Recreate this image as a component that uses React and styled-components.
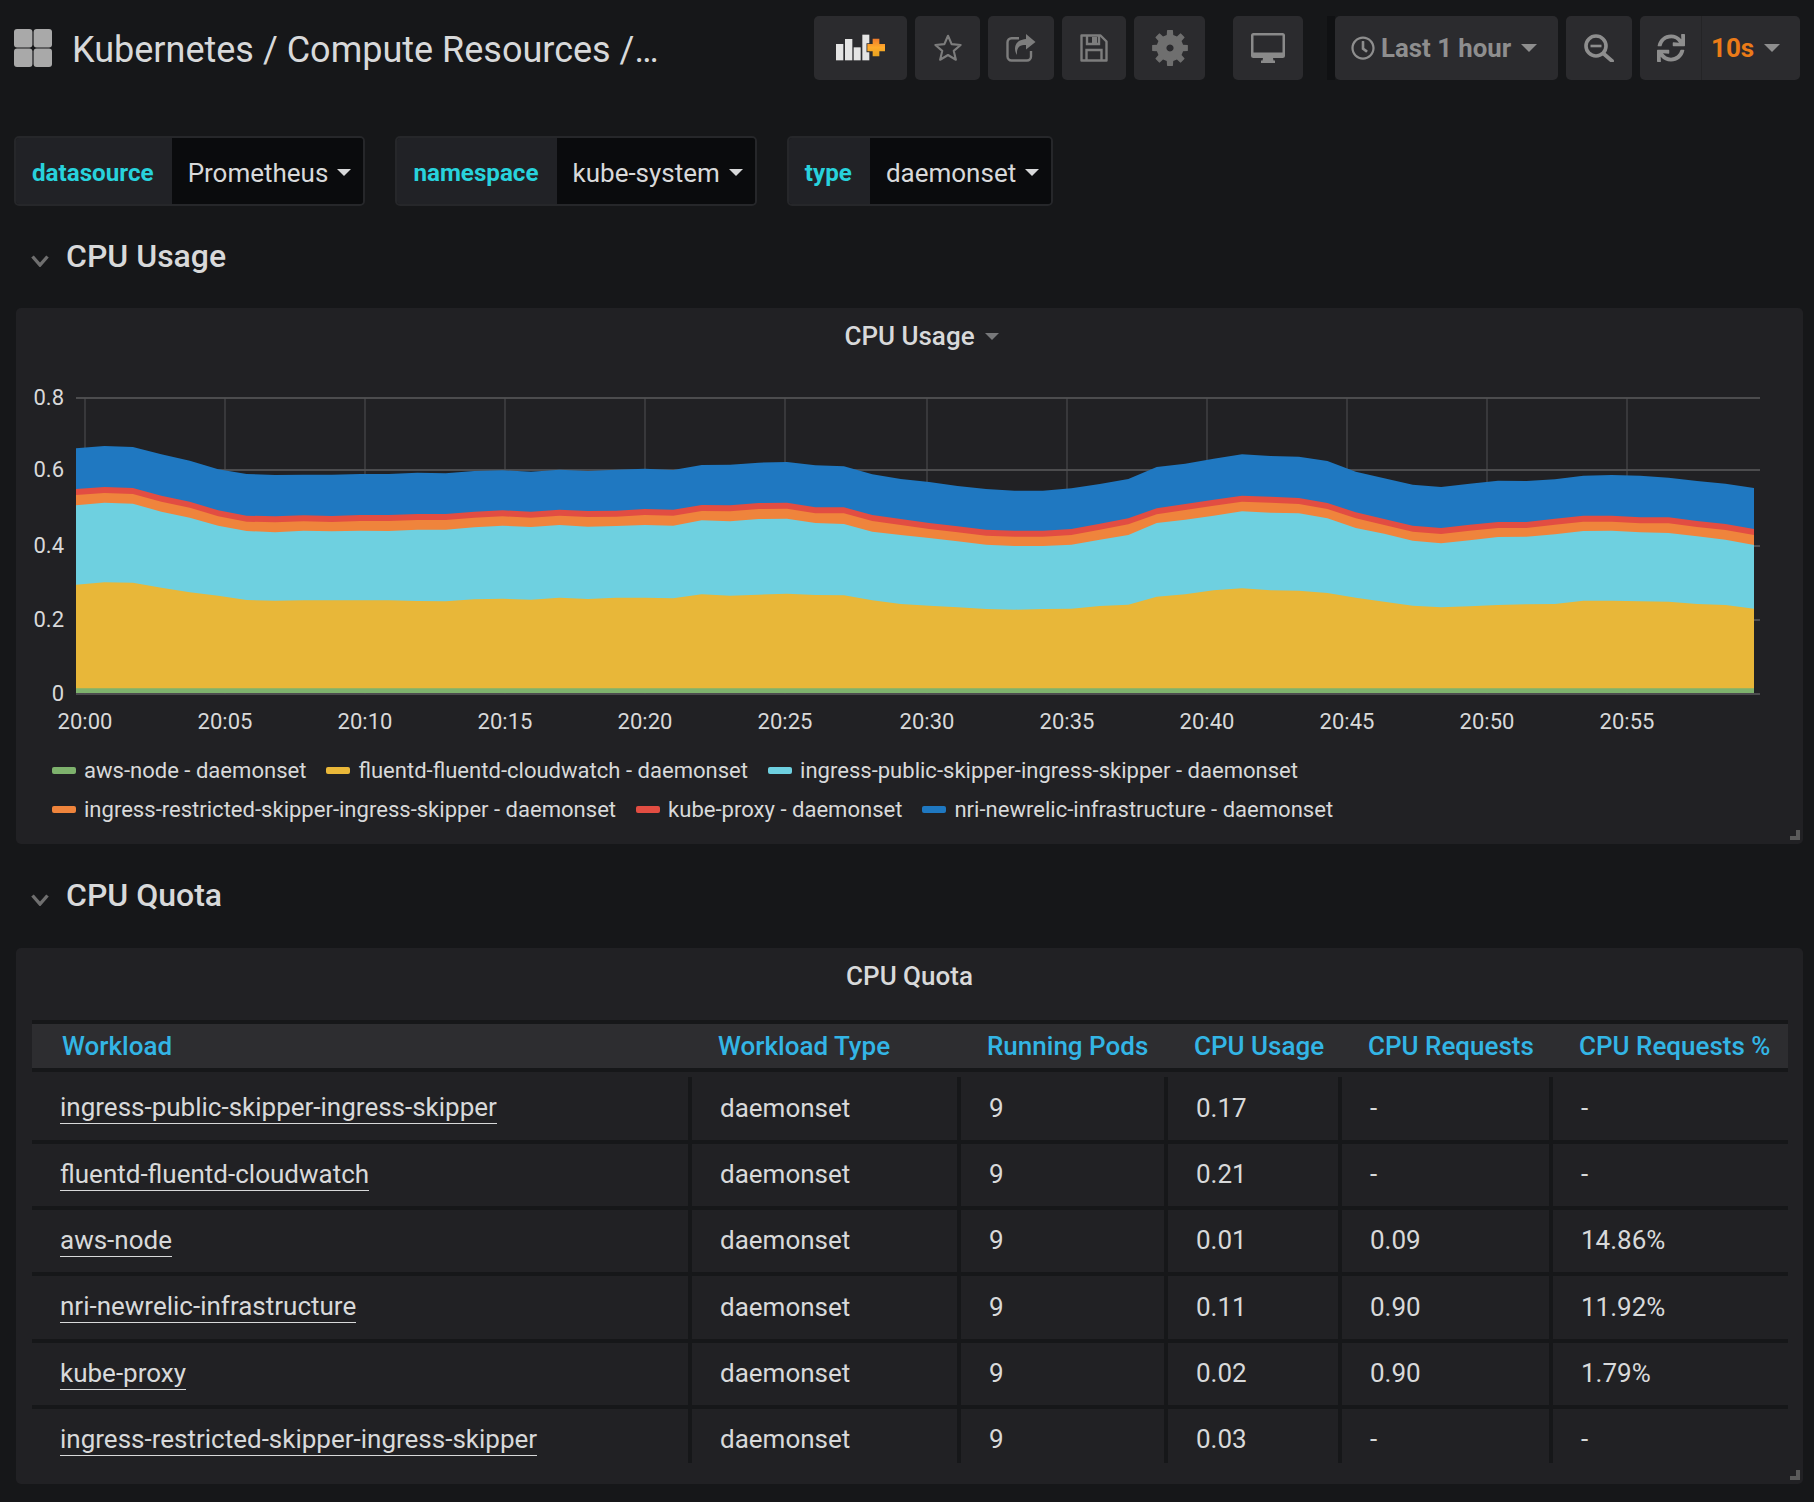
import React from 'react'
import styled, { createGlobalStyle } from 'styled-components'
import { FaRegClock, FaSync } from 'react-icons/fa'

const GlobalStyle = createGlobalStyle`
    html, body {
        margin: 0;
        padding: 0;
        background: #161719;
        color: #d8d9da;
        font-family: Roboto, "Liberation Sans", sans-serif;
    }
    * {
        box-sizing: border-box;
    }
`
const Page = styled.div`
    width: 1814px;
    height: 1502px;
    padding-top: 16px;
    overflow: hidden;
`
const Navbar = styled.div`
    display: flex;
    align-items: center;
    height: 64px;
    padding: 0 14px;
`
const TitleBlock = styled.div`
    display: flex;
    align-items: center;
    flex: 1;
    gap: 20px;
`
const PageTitle = styled.div`
    padding-top: 4px;
    font-size: 36px;
    color: #d8d9da;
    white-space: nowrap;
`
const ButtonGroup = styled.div`
    display: flex;
    gap: 8px;
    margin-left: ${p => p.$offset || 0}px;
    position: relative;
`
const TimeShadow = styled.div`
    width: 8px;
    height: 64px;
    margin-left: 24px;
    background: #101113;
`
const NavButton = styled.div`
    display: flex;
    align-items: center;
    justify-content: center;
    width: ${p => p.$width}px;
    height: 64px;
    background: #2b2b2e;
    border-radius: 5px;
    color: #7d7d7d;
`
const TimeButton = styled(NavButton)`
    justify-content: flex-start;
    padding-left: 16px;
    color: #8e8e8e;
    font-size: 25.8px;
    font-weight: 700;
`
const TimeText = styled.span`
    margin-left: 6px;
    margin-right: 10px;
`
const RefreshButton = styled(NavButton)`
    justify-content: flex-start;
`
const RefreshIcon = styled.div`
    display: flex;
    align-items: center;
    justify-content: center;
    width: 62px;
    height: 64px;
    border-right: 1px solid #242426;
    color: #8e8e8e;
`
const Interval = styled.span`
    margin-left: 9px;
    margin-right: 10px;
    color: #eb7b18;
    font-size: 26px;
    font-weight: 700;
`
const Caret = styled.span`
    display: inline-block;
    width: 0;
    height: 0;
    border-left: ${p => p.$size || 8}px solid transparent;
    border-right: ${p => p.$size || 8}px solid transparent;
    border-top: ${p => p.$size || 8}px solid ${p => p.$color || '#8e8e8e'};
`
const Templates = styled.div`
    display: flex;
    gap: 30px;
    margin: 56px 0 0 14px;
`
const Template = styled.div`
    display: flex;
    height: 70px;
    border: 2px solid #26272a;
    border-radius: 5px;
    overflow: hidden;
`
const TemplateLabel = styled.div`
    display: flex;
    align-items: center;
    padding: 3px 18px 0 16px;
    background: #212226;
    color: #28d2dc;
    font-size: 24.2px;
    font-weight: 700;
`
const TemplateValue = styled.div`
    display: flex;
    align-items: center;
    gap: 9px;
    padding: 3px 12px 0 16px;
    background: #0a0b0d;
    color: #d8d9da;
    font-size: 26px;
`
const SectionRow = styled.div`
    display: flex;
    align-items: center;
    gap: 17px;
    height: ${p => p.$height}px;
    padding-left: 31px;
    padding-bottom: 2px;
    color: #d8d9da;
    font-size: 32px;
    font-weight: 500;
`
const Chevron = styled.svg`
    width: 18px;
    height: 12px;
    margin-top: 10px;
`
const Panel = styled.div`
    position: relative;
    width: 1787px;
    height: 536px;
    margin-left: 16px;
    background: #212124;
    border-radius: 5px;
`
const PanelTitle = styled.div`
    display: flex;
    justify-content: center;
    padding-top: 13px;
    height: 72px;
    line-height: 30px;
    font-size: 26px;
    font-weight: 500;
`
const PanelTitleText = styled.span`
    position: relative;
`
const TitleCaret = styled.span`
    position: absolute;
    display: flex;
    left: calc(100% + 10px);
    top: 12px;
`
const ChartSvg = styled.svg`
    display: block;
    margin-top: -1px;
`
const Legend = styled.div`
    display: flex;
    flex-wrap: wrap;
    column-gap: 20px;
    padding: 6px 36px 0;
`
const LegendItem = styled.div`
    display: flex;
    align-items: center;
    height: 39px;
    font-size: 22.05px;
    color: #d8d9da;
`
const Swatch = styled.span`
    width: 24px;
    height: 7px;
    margin-right: 8px;
    border-radius: 2px;
    background: ${p => p.$color};
`
const ResizeHandle = styled.svg`
    position: absolute;
    right: 3px;
    bottom: 4px;
`
const Table = styled.table`
    width: 1756px;
    margin-left: 16px;
    border-collapse: separate;
    border-spacing: 0;
    table-layout: fixed;
`
const HeadCell = styled.th`
    height: 52px;
    padding: 0 0 0 ${p => p.$first ? 30 : 26}px;
    background: #2d2d30;
    border-top: 4px solid #161719;
    border-bottom: 4px solid #161719;
    color: #33b5e5;
    font-size: 26px;
    font-weight: 500;
    text-align: left;
    white-space: nowrap;
`
const Spacer = styled.td`
    height: 5px;
    padding: 0;
`
const Cell = styled.td`
    height: ${p => p.$height}px;
    padding: ${p => p.$last ? 6 : 0}px 0 ${p => p.$last ? 0 : 2}px 28px;
    border-bottom: ${p => p.$last ? 0 : 4}px solid #161719;
    border-right: ${p => p.$end ? 0 : 4}px solid #161719;
    font-size: 26px;
    color: #d8d9da;
    white-space: nowrap;
`
const WorkloadLink = styled.span`
    display: inline-block;
    vertical-align: -1px;
    line-height: 30px;
    padding-bottom: 1px;
    border-bottom: 1px solid #d8d9da;
`

const series = [
    { name: 'aws-node - daemonset', color: '#7eb26d' },
    { name: 'fluentd-fluentd-cloudwatch - daemonset', color: '#eab839' },
    { name: 'ingress-public-skipper-ingress-skipper - daemonset', color: '#6ed0e0' },
    { name: 'ingress-restricted-skipper-ingress-skipper - daemonset', color: '#ef843c' },
    { name: 'kube-proxy - daemonset', color: '#e24d42' },
    { name: 'nri-newrelic-infrastructure - daemonset', color: '#1f78c1' },
]

// upper edge of every stacked band, one value a minute
const blueTop = [448,441,444,466,485,511,525,528,527,527,525,525,521,523,516,514,518,512,516,512,509,513,498,497,491,489,499,502,526,540,549,561,570,575,575,568,555,540,504,494,479,466,471,473,486,518,538,557,564,554,545,546,541,530,528,530,536,546,554,567]
const redTop = [570,564,567,590,608,634,650,652,649,651,648,648,645,645,638,634,638,632,636,635,630,632,618,619,612,611,625,625,648,660,672,682,692,695,695,690,674,658,628,615,602,590,593,597,612,640,660,680,687,677,669,669,659,650,650,655,655,666,675,690]
const cyanTop = [619,611,614,638,656,680,696,700,695,697,695,696,692,692,685,680,684,678,683,681,678,680,664,667,660,659,672,675,698,708,717,727,737,741,741,737,722,708,672,662,650,637,641,643,658,687,704,725,733,724,714,713,706,696,695,700,702,712,722,738]
const yellowTop = [857,850,851,866,880,890,903,905,904,904,904,904,906,907,901,899,902,896,900,896,896,898,886,890,887,884,888,889,904,915,920,925,930,932,930,929,921,917,893,886,874,868,874,875,882,896,908,920,925,922,918,916,915,905,905,907,908,915,918,929]
const orangeTop = redTop.map(v => v + 18)
const greenTop = redTop.map(() => 1168)

const BASE_Y = 694
const toX = i => 76 + i * 28.44
const toY = v => 300 + v / 3
const band = top => `76,${BASE_Y} ` + top.map((v, i) => `${toX(i).toFixed(1)},${toY(v).toFixed(1)}`).join(' ') + ` 1754,${BASE_Y}`

const layers = [
    { top: blueTop, color: '#1f78c1' },
    { top: redTop, color: '#e24d42' },
    { top: orangeTop, color: '#ef843c' },
    { top: cyanTop, color: '#6ed0e0' },
    { top: yellowTop, color: '#e8b739' },
    { top: greenTop, color: '#7eb26d' },
]
const yTicks = [['0.8', 399], ['0.6', 471], ['0.4', 547], ['0.2', 621], ['0', 695]]
const xTicks = [['20:00', 85], ['20:05', 225], ['20:10', 365], ['20:15', 505], ['20:20', 645], ['20:25', 785], ['20:30', 927], ['20:35', 1067], ['20:40', 1207], ['20:45', 1347], ['20:50', 1487], ['20:55', 1627]]

const columns = [
    { title: 'Workload', width: 660 },
    { title: 'Workload Type', width: 269 },
    { title: 'Running Pods', width: 207 },
    { title: 'CPU Usage', width: 174 },
    { title: 'CPU Requests', width: 211 },
    { title: 'CPU Requests %', width: 235 },
]
const rows = [
    ['ingress-public-skipper-ingress-skipper', 'daemonset', '9', '0.17', '-', '-'],
    ['fluentd-fluentd-cloudwatch', 'daemonset', '9', '0.21', '-', '-'],
    ['aws-node', 'daemonset', '9', '0.01', '0.09', '14.86%'],
    ['nri-newrelic-infrastructure', 'daemonset', '9', '0.11', '0.90', '11.92%'],
    ['kube-proxy', 'daemonset', '9', '0.02', '0.90', '1.79%'],
    ['ingress-restricted-skipper-ingress-skipper', 'daemonset', '9', '0.03', '-', '-'],
]
const rowHeights = [67, 66, 66, 67, 66, 54]

const gearPath = () => {
    const teeth = 8
    const pts = []
    for (let i = 0; i < teeth; i++) {
        const a = (i / teeth) * Math.PI * 2 - Math.PI / 2
        const step = Math.PI / teeth
        const corners = [[a - step * 0.42, 18], [a - step * 0.3, 18], [a + step * 0.3, 18], [a + step * 0.42, 18], [a + step * 0.62, 13.5], [a + step * 1.38, 13.5]]
        corners.forEach(([ang, r]) => pts.push(`${(18 + Math.cos(ang) * r).toFixed(2)} ${(18 + Math.sin(ang) * r).toFixed(2)}`))
    }
    return `M${pts.join('L')}Z M18 14.4a3.6 3.6 0 1 0 .01 0Z`
}

const Logo = () => (
    <svg width="38" height="38" viewBox="0 0 38 38" fill="#a9a9a9">
        <rect x="0" y="0" width="18.4" height="18.4" rx="3" />
        <rect x="19.6" y="0" width="18.4" height="18.4" rx="3" />
        <rect x="0" y="19.6" width="18.4" height="18.4" rx="3" />
        <rect x="19.6" y="19.6" width="18.4" height="18.4" rx="3" />
    </svg>
)
const AddPanelIcon = () => (
    <svg width="50" height="30" viewBox="0 0 150 90">
        <defs>
            <linearGradient id="plus" x1="0" y1="0" x2="0" y2="1">
                <stop offset="0" stopColor="#ef7a2b" />
                <stop offset="0.5" stopColor="#ffab2b" />
                <stop offset="1" stopColor="#e5a21f" />
            </linearGradient>
        </defs>
        <g fill="#e4e4e4">
            <rect x="0" y="33" width="22" height="49" />
            <rect x="27" y="18" width="22" height="64" />
            <rect x="53" y="43" width="21" height="39" />
            <rect x="79" y="5" width="21" height="77" />
        </g>
        <path d="M110 17h20v16h17v22h-17v15h-20v-15h-16v-22h16z" fill="url(#plus)" stroke="#2b2b2e" strokeWidth="5" paintOrder="stroke" />
    </svg>
)
const StarIcon = () => (
    <svg width="30" height="30" viewBox="0 0 24 24" fill="none" stroke="#7d7d7d" strokeWidth="1.7" strokeLinejoin="round">
        <path d="M12 2.2l2.9 6.7 7.2.7-5.5 4.7 1.7 7.1-6.3-3.8-6.3 3.8 1.7-7.1-5.5-4.7 7.2-.7z" />
    </svg>
)
const ShareIcon = () => (
    <svg width="30" height="28" viewBox="0 0 30 28">
        <path d="M13 4.200H5.500a4 4 0 0 0-4 4V22.500a4 4 0 0 0 4 4H21a4 4 0 0 0 4-4V17" fill="none" stroke="#7d7d7d" strokeWidth="2.400" />
        <path d="M20 0l9.500 8-9.500 7.500V11C14 11 10.500 12.500 11 21 7.500 16 7.500 6 20 5z" fill="#7d7d7d" />
    </svg>
)
const SaveIcon = () => (
    <svg width="28" height="28" viewBox="0 0 28 28" fill="none" stroke="#7d7d7d" strokeWidth="2.4">
        <path d="M1.5 1.5h19l6 6v19h-25z" strokeLinejoin="round" />
        <path d="M7 2v8h12V2" />
        <path d="M6.5 26v-10h15v10" />
        <rect x="12" y="3" width="5" height="6" fill="#7d7d7d" stroke="none" />
    </svg>
)
const GearIcon = () => (
    <svg width="36" height="36" viewBox="0 0 36 36">
        <path d={gearPath()} fill="#6f6f6f" fillRule="evenodd" />
    </svg>
)
const DesktopIcon = () => (
    <svg width="34" height="30" viewBox="0 0 34 30">
        <path d="M2.5 0h29A2.5 2.5 0 0 1 34 2.5v20a2.5 2.5 0 0 1-2.5 2.5H22l.5 2.5H24V30H10v-2.5h1.500L12 25H2.500A2.500 2.500 0 0 1 0 22.500v-20A2.500 2.500 0 0 1 2.500 0zM2.500 2.500v17h29v-17z" fill="#8a8a8a" fillRule="evenodd" />
    </svg>
)
const ZoomOutIcon = () => (
    <svg width="30" height="28" viewBox="0 0 30 28" fill="none" stroke="#8e8e8e">
        <circle cx="12" cy="12" r="10" strokeWidth="3.6" />
        <path d="M6.500 12h11" strokeWidth="2.600" />
        <path d="M20 20l8 7" strokeWidth="3.800" strokeLinecap="round" />
    </svg>
)
const SectionChevron = () => (
    <Chevron viewBox="0 0 18 12" fill="none" stroke="#6f6f6f" strokeWidth="3.400">
        <path d="M1.500 1.500L9 10l7.500-8.500" />
    </Chevron>
)
const Handle = () => (
    <ResizeHandle width="10" height="10" viewBox="0 0 10 10">
        <path d="M6 0h4v10H0V6h6z" fill="#5a5a5a" />
    </ResizeHandle>
)

const Chart = () => (
    <ChartSvg width="1787" height="366" viewBox="16 380 1787 366">
        {yTicks.map(([label, y]) => (
            <g key={label}>
                <line x1="76" x2="1760" y1={y} y2={y} stroke="#4c4c4e" strokeWidth="2" />
                <text x="64" y={y + 7} textAnchor="end" fontSize="22" fill="#d8d9da">{label}</text>
            </g>
        ))}
        {xTicks.map(([label, x]) => (
            <g key={label}>
                <line x1={x} x2={x} y1="399" y2="695" stroke="#505052" strokeWidth="1" />
                <text x={x} y="730" textAnchor="middle" fontSize="22" fill="#d8d9da">{label}</text>
            </g>
        ))}
        {layers.map(l => (
            <polygon key={l.color} points={band(l.top)} fill={l.color} />
        ))}
    </ChartSvg>
)

const App = () => {
    return (
        <Page>
            <GlobalStyle />
            <Navbar>
                <TitleBlock>
                    <Logo />
                    <PageTitle>Kubernetes / Compute Resources /…</PageTitle>
                </TitleBlock>
                <ButtonGroup>
                    <NavButton $width={93}><AddPanelIcon /></NavButton>
                    <NavButton $width={65}><StarIcon /></NavButton>
                    <NavButton $width={66}><ShareIcon /></NavButton>
                    <NavButton $width={64}><SaveIcon /></NavButton>
                    <NavButton $width={71}><GearIcon /></NavButton>
                </ButtonGroup>
                <ButtonGroup $offset={28}>
                    <NavButton $width={70}><DesktopIcon /></NavButton>
                </ButtonGroup>
                <TimeShadow />
                <ButtonGroup>
                    <TimeButton $width={223}>
                        <FaRegClock size={24} />
                        <TimeText>Last 1 hour</TimeText>
                        <Caret />
                    </TimeButton>
                    <NavButton $width={66}><ZoomOutIcon /></NavButton>
                    <RefreshButton $width={160}>
                        <RefreshIcon><FaSync size={28} /></RefreshIcon>
                        <Interval>10s</Interval>
                        <Caret />
                    </RefreshButton>
                </ButtonGroup>
            </Navbar>
            <Templates>
                <Template>
                    <TemplateLabel>datasource</TemplateLabel>
                    <TemplateValue>Prometheus <Caret $size={7} $color="#d8d9da" /></TemplateValue>
                </Template>
                <Template>
                    <TemplateLabel>namespace</TemplateLabel>
                    <TemplateValue>kube-system <Caret $size={7} $color="#d8d9da" /></TemplateValue>
                </Template>
                <Template>
                    <TemplateLabel>type</TemplateLabel>
                    <TemplateValue>daemonset <Caret $size={7} $color="#d8d9da" /></TemplateValue>
                </Template>
            </Templates>
            <SectionRow $height={102}>
                <SectionChevron />
                CPU Usage
            </SectionRow>
            <Panel>
                <PanelTitle>
                    <PanelTitleText>
                        CPU Usage
                        <TitleCaret><Caret $size={7} $color="#77787a" /></TitleCaret>
                    </PanelTitleText>
                </PanelTitle>
                <Chart />
                <Legend>
                    {series.map(s => (
                        <LegendItem key={s.name}>
                            <Swatch $color={s.color} />
                            {s.name}
                        </LegendItem>
                    ))}
                </Legend>
                <Handle />
            </Panel>
            <SectionRow $height={104}>
                <SectionChevron />
                CPU Quota
            </SectionRow>
            <Panel>
                <PanelTitle>
                    <PanelTitleText>CPU Quota</PanelTitleText>
                </PanelTitle>
                <Table>
                    <colgroup>
                        {columns.map(c => <col key={c.title} width={c.width} />)}
                    </colgroup>
                    <thead>
                        <tr>
                            {columns.map((c, i) => <HeadCell key={c.title} $first={i === 0}>{c.title}</HeadCell>)}
                        </tr>
                    </thead>
                    <tbody>
                        <tr><Spacer colSpan={6} /></tr>
                        {rows.map((row, r) => (
                            <tr key={row[0]}>
                                {row.map((value, c) => (
                                    <Cell key={c} $height={rowHeights[r]} $last={r === rows.length - 1} $end={c === row.length - 1}>
                                        {c === 0 ? <WorkloadLink>{value}</WorkloadLink> : value}
                                    </Cell>
                                ))}
                            </tr>
                        ))}
                    </tbody>
                </Table>
                <Handle />
            </Panel>
        </Page>
    )
}

export default App
